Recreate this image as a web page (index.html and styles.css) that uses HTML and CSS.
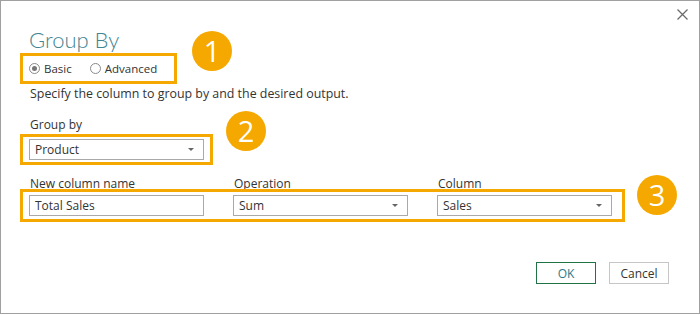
FILE: index.html
```html
<!DOCTYPE html>
<html lang="en">
<head>
  <meta charset="UTF-8">
  <meta name="viewport" content="width=device-width, initial-scale=1.0">
  <title>Group By</title>
  <link rel="stylesheet" href="styles.css">
</head>
<body>
  <div class="dialog">
    <button class="close" aria-label="Close">
      <svg width="11" height="11" viewBox="0 0 11 11"><path d="M0.5 0.5 L10.5 10.5 M10.5 0.5 L0.5 10.5" stroke="#6b6b6b" stroke-width="1.3" fill="none"/></svg>
    </button>

    <h1 class="title">Group By</h1>

    <div class="row">
      <div class="mark mark-mode">
        <label class="radio"><span class="dot checked"></span>Basic</label>
        <label class="radio"><span class="dot"></span>Advanced</label>
      </div>
      <span class="badge badge-1">1</span>
    </div>

    <p class="hint">Specify the column to group by and the desired output.</p>

    <div class="label">Group by</div>
    <div class="row">
      <div class="mark mark-group">
        <div class="field">Product<span class="caret"></span></div>
      </div>
      <span class="badge badge-2">2</span>
    </div>

    <div class="agg-labels">
      <div class="label">New column name</div>
      <div class="label">Operation</div>
      <div class="label">Column</div>
    </div>
    <div class="row">
      <div class="mark mark-agg">
        <div class="field">Total Sales</div>
        <div class="field">Sum<span class="caret"></span></div>
        <div class="field">Sales<span class="caret"></span></div>
      </div>
      <span class="badge badge-3">3</span>
    </div>

    <div class="actions">
      <button class="btn btn-ok">OK</button>
      <button class="btn">Cancel</button>
    </div>
  </div>
</body>
</html>
```

FILE: styles.css
```css
:root {
  --accent: #f5a800;
  --text-color: #333;
  --field-border: #a9a9a9;
}

body {
  margin: 0;
  font-family: 'Open Sans', 'Liberation Sans', sans-serif;
  font-size: 12px;
  color: var(--text-color);
  background: #fff;
}

/* 对话框外框 */
.dialog {
  position: relative;
  box-sizing: border-box;
  width: 700px;
  height: 314px;
  border: 1px solid #a0a0a0;
  padding: 0 0 0 19px;
}

.close {
  position: absolute;
  top: 6px;
  right: 10px;
  width: 13px;
  height: 13px;
  padding: 1px;
  border: none;
  background: none;
}

.title {
  margin: 26px 0 0 9px;
  font-family: 'Lato', 'Open Sans', sans-serif;
  font-size: 22px;
  font-weight: 300;
  line-height: 25px;
  color: #3f8593;
}

.row {
  display: flex;
  align-items: flex-start;
}

/* 橙色标注框 */
.mark {
  border: 3px solid var(--accent);
  display: flex;
  align-items: center;
}

.mark-mode {
  width: 145px;
  height: 25px;
  padding-left: 6px;
  margin-top: 1px;
}

.mark-group {
  padding: 2px 6px;
  margin-top: 2px;
}

.mark-agg {
  gap: 29px;
  padding: 3px 10px 3px 6px;
}

.badge {
  width: 40px;
  height: 40px;
  border-radius: 50%;
  background: var(--accent);
  color: #fff;
  font-size: 29px;
  line-height: 40px;
  text-align: center;
  flex-shrink: 0;
}

.badge-1 { margin: -21px 0 0 15px; }
.badge-2 { margin: -21px 0 0 13px; }
.badge-3 { margin: -14px 0 0 12px; }

.radio {
  display: flex;
  align-items: center;
  margin-right: 18px;
  font-size: 11.5px;
}

.dot {
  box-sizing: border-box;
  width: 11px;
  height: 11px;
  border: 1px solid #8a8a8a;
  border-radius: 50%;
  margin-right: 4px;
  display: flex;
  align-items: center;
  justify-content: center;
}

.dot.checked::after {
  content: "";
  width: 5px;
  height: 5px;
  border-radius: 50%;
  background: #777;
}

.hint {
  margin: 2px 0 0 10px;
  font-size: 12.4px;
  line-height: 16px;
}

.label {
  line-height: 14px;
  padding-left: 10px;
}

.hint + .label {
  margin-top: 16px;
}

.agg-labels {
  display: grid;
  grid-template-columns: 204px 204px 204px;
  margin-top: 12px;
  margin-bottom: -2px;
}

.field {
  position: relative;
  box-sizing: border-box;
  width: 175px;
  height: 21px;
  border: 1px solid var(--field-border);
  padding-left: 5px;
  line-height: 19px;
}

.caret {
  position: absolute;
  right: 9px;
  top: 8px;
  border-left: 3px solid transparent;
  border-right: 3px solid transparent;
  border-top: 3px solid #666;
}

.actions {
  display: flex;
  justify-content: flex-end;
  gap: 13px;
  margin: 40px 30px 0 0;
}

.btn {
  width: 60px;
  height: 22px;
  background: #fff;
  border: 1px solid #c6c6c6;
  font-family: inherit;
  font-size: 12px;
  color: var(--text-color);
  padding: 0;
}

.btn-ok {
  border-color: #217346;
  color: #2a7a8a;
}
```
